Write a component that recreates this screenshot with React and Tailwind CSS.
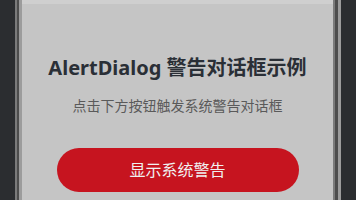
export default function App() {
  return (
    <div className="flex h-[200px] w-[356px] overflow-hidden bg-[#2b2d30]" style={{ fontFamily: '"Noto Sans", "Noto Sans CJK SC", sans-serif' }}>
      <div className="w-[15px] shrink-0" />
      {/* phone frame, left edge */}
      <div className="w-[2px] shrink-0 bg-[#7b7b7b]" />
      <div className="w-[2px] shrink-0 bg-[#4d4d4d]" />
      <div className="w-[3px] shrink-0 bg-[#9c9c9c]" />

      <div className="flex flex-1 flex-col items-center bg-[#c5c5c5]">
        <div className="h-[4px] w-full bg-[#cfcfcf]" />
        <h1 className="mt-[50px] text-[20px] font-bold leading-[28px] text-[#2a2f36]">AlertDialog 警告对话框示例</h1>
        <p className="mt-[14px] text-[14px] leading-[20px] text-[#5a5a5a]">点击下方按钮触发系统警告对话框</p>
        <button className="mt-[32px] flex h-[44px] w-[242px] items-center justify-center rounded-full bg-[#c6141f] text-[16px] text-[#f0f0f0]">
          显示系统警告
        </button>
      </div>

      {/* phone frame, right edge */}
      <div className="w-[2px] shrink-0 bg-[#7b7b7b]" />
      <div className="w-[3px] shrink-0 bg-[#4d4d4d]" />
      <div className="w-[3px] shrink-0 bg-[#9c9c9c]" />
      <div className="w-[15px] shrink-0" />
    </div>
  );
}
